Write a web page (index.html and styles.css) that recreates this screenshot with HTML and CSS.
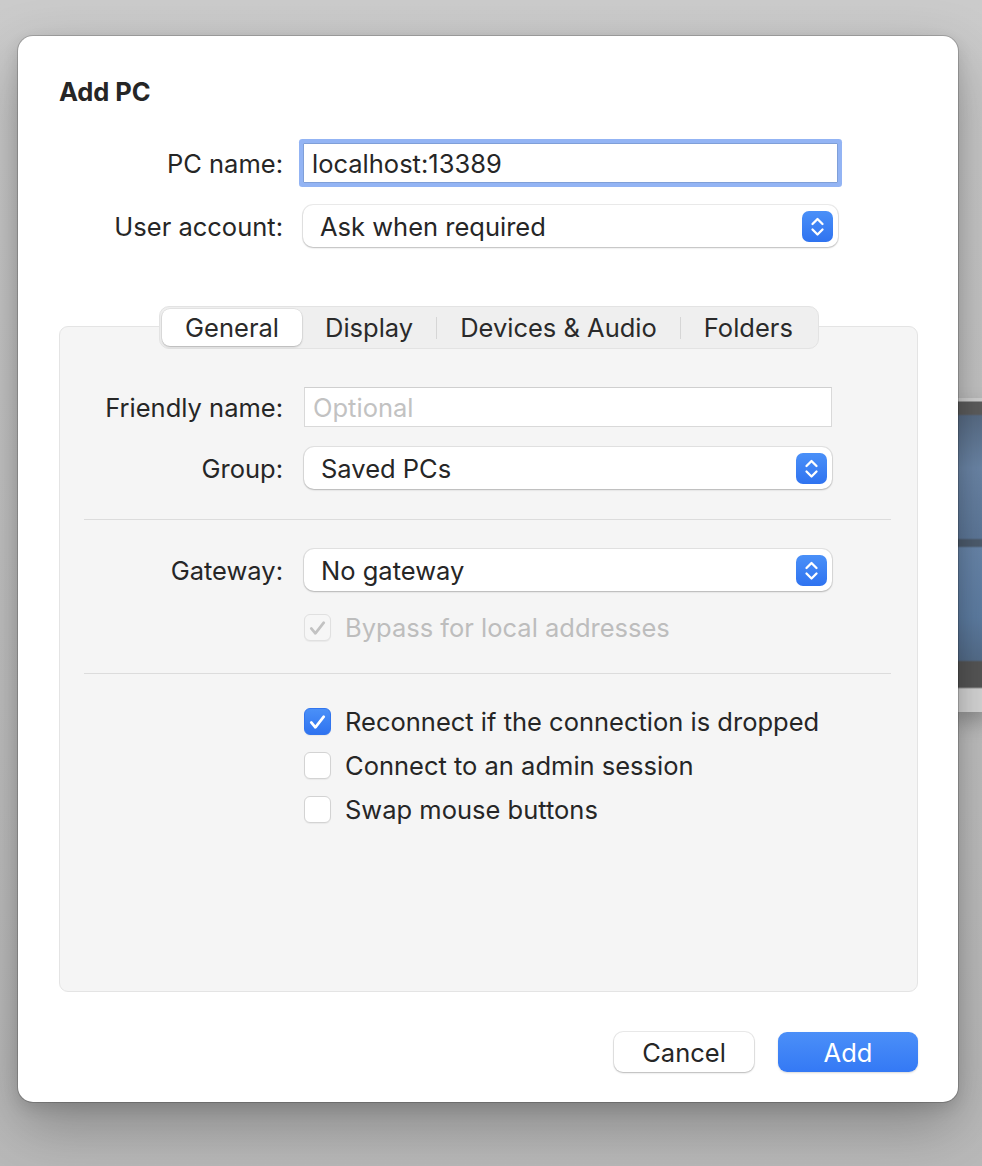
FILE: index.html
```html
<!DOCTYPE html>
<html>
<head>
<meta charset="utf-8">
<link rel="stylesheet" href="styles.css">
</head>
<body>
<div class="bgwin"></div>
<div class="dialog">
  <h1 class="title">Add PC</h1>
  <div class="form top">
    <label class="lbl">PC name:</label>
    <div class="field focused">localhost:13389</div>
    <label class="lbl">User account:</label>
    <div class="popup"><span>Ask when required</span>
      <span class="arrows"><svg viewBox="0 0 31 31" width="31" height="31"><path d="M10.5 13 L15.5 8 L20.5 13 M10.5 18.5 L15.5 23.5 L20.5 18.5" fill="none" stroke="#fff" stroke-width="2.3" stroke-linecap="round" stroke-linejoin="round"/></svg></span>
    </div>
  </div>

  <div class="tabbox">
    <div class="segmented">
      <div class="seg sel">General</div>
      <div class="seg">Display</div>
      <div class="sep"></div>
      <div class="seg">Devices &amp; Audio</div>
      <div class="sep"></div>
      <div class="seg">Folders</div>
    </div>

    <div class="form inner first">
      <label class="lbl">Friendly name:</label>
      <div class="field plain"><span class="ph">Optional</span></div>
      <label class="lbl">Group:</label>
      <div class="popup"><span>Saved PCs</span>
        <span class="arrows"><svg viewBox="0 0 31 31" width="31" height="31"><path d="M10.5 13 L15.5 8 L20.5 13 M10.5 18.5 L15.5 23.5 L20.5 18.5" fill="none" stroke="#fff" stroke-width="2.3" stroke-linecap="round" stroke-linejoin="round"/></svg></span>
      </div>
    </div>

    <div class="rule r1"></div>

    <div class="form inner gw">
      <label class="lbl">Gateway:</label>
      <div class="popup"><span>No gateway</span>
        <span class="arrows"><svg viewBox="0 0 31 31" width="31" height="31"><path d="M10.5 13 L15.5 8 L20.5 13 M10.5 18.5 L15.5 23.5 L20.5 18.5" fill="none" stroke="#fff" stroke-width="2.3" stroke-linecap="round" stroke-linejoin="round"/></svg></span>
      </div>
      <div></div>
      <div class="check disabled">
        <span class="box"><svg viewBox="0 0 28 28" width="28" height="28"><path d="M7.5 14.5 L11.8 19.5 L20.5 8.5" fill="none" stroke="#c2c2c2" stroke-width="2.8" stroke-linecap="round" stroke-linejoin="round"/></svg></span>
        <span>Bypass for local addresses</span>
      </div>
    </div>

    <div class="rule r2"></div>

    <div class="checks">
      <div class="check">
        <span class="box on"><svg viewBox="0 0 28 28" width="28" height="28"><path d="M7.5 14.5 L11.8 19.5 L20.5 8.5" fill="none" stroke="#fff" stroke-width="2.8" stroke-linecap="round" stroke-linejoin="round"/></svg></span>
        <span>Reconnect if the connection is dropped</span>
      </div>
      <div class="check">
        <span class="box"></span>
        <span>Connect to an admin session</span>
      </div>
      <div class="check">
        <span class="box"></span>
        <span>Swap mouse buttons</span>
      </div>
    </div>
  </div>

  <div class="buttons">
    <button class="btn">Cancel</button>
    <button class="btn primary">Add</button>
  </div>
</div>
</body>
</html>
```

FILE: styles.css
```css
html, body {
  margin: 0;
  padding: 0;
}
body {
  width: 982px;
  height: 1166px;
  overflow: hidden;
  background: linear-gradient(180deg, #cbcbcb 0%, #c2c2c2 60%, #b9b9b9 100%);
  font-family: Inter, "Liberation Sans", sans-serif;
  color: #262626;
  position: relative;
}
.bgwin {
  position: absolute;
  left: 950px;
  top: 398px;
  width: 40px;
  height: 314px;
  background: linear-gradient(180deg,
    #d4d4d4 0px, #d4d4d4 3px,
    #5e5e5e 4px, #5e5e5e 16px,
    #5a6e88 18px, #6d88aa 70px, #5f7a9c 140px,
    #4f5e70 142px, #4f5e70 148px,
    #6a88ad 150px, #5f7fa5 220px, #566f8d 262px,
    #575757 264px, #575757 289px,
    #d9d9d9 291px, #d9d9d9 312px);
  box-shadow: 0 10px 20px rgba(0,0,0,0.25);
}
.dialog {
  position: relative;
  margin: 36px 0 0 18px;
  width: 940px;
  height: 1066px;
  box-sizing: border-box;
  padding: 40px 40px 0 41px;
  background: #fff;
  border-radius: 15px;
  box-shadow: 0 0 0 1px rgba(0,0,0,0.18), 0 24px 60px rgba(0,0,0,0.28), 0 6px 16px rgba(0,0,0,0.12);
  display: flex;
  flex-direction: column;
}
.title {
  margin: 0;
  font-size: 25.5px;
  line-height: 32px;
  font-weight: 700;
  letter-spacing: -0.1px;
}
.form {
  display: grid;
  grid-template-columns: 224px 535px;
  column-gap: 20px;
  row-gap: 22px;
}
.form.top {
  margin-top: 35px;
  grid-template-rows: 40px 42px;
}
.lbl {
  font-size: 25.5px;
  text-align: right;
  align-self: center;
  white-space: nowrap;
}
.field {
  box-sizing: border-box;
  background: #fff;
  font-size: 25.5px;
  display: flex;
  align-items: center;
  padding-left: 8px;
}
.field.focused {
  height: 40px;
  border: 1px solid #7f9fd8;
  box-shadow: 0 0 0 4px #93b4f4;
  border-radius: 1px;
}
.field.plain {
  height: 40px;
  border: 1px solid #d9d9d9;
  border-top-color: #cfcfcf;
}
.ph {
  color: #c2c2c2;
}
.popup {
  box-sizing: border-box;
  height: 42px;
  background: #fff;
  border-radius: 10px;
  box-shadow: 0 0 0 1px rgba(0,0,0,0.08), 0 1px 2px rgba(0,0,0,0.2);
  font-size: 25.5px;
  display: flex;
  align-items: center;
  justify-content: space-between;
  padding: 0 5px 0 17px;
}
.arrows {
  width: 31px;
  height: 31px;
  border-radius: 7px;
  background: linear-gradient(180deg, #4a90f8 0%, #2f73f0 100%);
  display: flex;
}
.tabbox {
  margin-top: 79px;
  height: 666px;
  box-sizing: border-box;
  background: #f5f5f5;
  border: 1px solid #e4e4e4;
  border-radius: 9px;
  display: flex;
  flex-direction: column;
}
.segmented {
  margin-top: -21px;
  align-self: center;
  height: 43px;
  box-sizing: border-box;
  display: flex;
  align-items: center;
  padding: 2px;
  background: #efefef;
  border: 1px solid #e3e3e3;
  border-radius: 10px;
  margin-left: 1px;
}
.seg {
  height: 37px;
  display: flex;
  align-items: center;
  padding: 0 23px;
  font-size: 25.5px;
  color: #2a2a2a;
  border-radius: 8px;
}
.seg.sel {
  background: #fff;
  box-shadow: 0 0 0 0.5px rgba(0,0,0,0.08), 0 1px 2px rgba(0,0,0,0.22);
}
.sep {
  width: 1px;
  height: 22px;
  background: #d6d6d6;
}
.form.inner {
  grid-template-columns: 223px 528px;
  column-gap: 21px;
  row-gap: 20px;
  grid-template-rows: 40px 42px;
}
.form.inner.first {
  margin-top: 38px;
}
.rule {
  height: 1px;
  background: #dcdcdc;
  margin: 0 26px 0 24px;
}
.rule.r1 { margin-top: 30px; }
.form.inner.gw {
  margin-top: 29px;
  grid-template-rows: 42px 28px;
  row-gap: 22px;
}
.rule.r2 { margin-top: 32px; }
.check {
  display: flex;
  align-items: center;
  gap: 14px;
  font-size: 25.5px;
  height: 28px;
}
.check.disabled {
  color: #bdbdbd;
}
.box {
  width: 27px;
  height: 27px;
  box-sizing: border-box;
  border-radius: 6px;
  background: #fff;
  border: 1px solid #d3d3d3;
  box-shadow: 0 1px 1px rgba(0,0,0,0.05);
  display: flex;
  overflow: hidden;
  flex: none;
}
.box svg { margin: -1px; }
.check.disabled .box {
  background: #f6f6f6;
  border-color: #e0e0e0;
}
.box.on {
  background: linear-gradient(180deg, #4a90f8 0%, #2f73f0 100%);
  border-color: #3275ee;
}
.checks {
  margin-top: 33px;
  margin-left: 244px;
  display: flex;
  flex-direction: column;
  gap: 16px;
}
.buttons {
  margin-top: 40px;
  display: flex;
  justify-content: flex-end;
  gap: 24px;
}
.btn {
  width: 140px;
  height: 40px;
  border: none;
  border-radius: 9px;
  font-family: Inter, "Liberation Sans", sans-serif;
  font-size: 25.5px;
  color: #262626;
  background: #fff;
  box-shadow: 0 0 0 1px rgba(0,0,0,0.08), 0 1px 2px rgba(0,0,0,0.22);
  padding: 0;
}
.btn.primary {
  color: #fff;
  background: linear-gradient(180deg, #4b8ff8 0%, #3479f5 100%);
  box-shadow: 0 1px 2px rgba(0,0,0,0.15);
}
```
